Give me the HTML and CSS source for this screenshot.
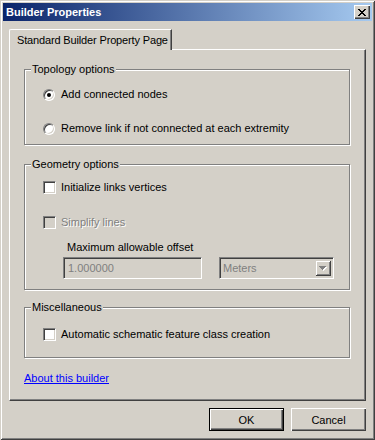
FILE: index.html
```html
<!DOCTYPE html>
<html lang="en">
<head>
<meta charset="UTF-8" />
<title>Builder Properties</title>
<link rel="stylesheet" href="styles.css">
</head>
<body>
<div class="window">
  <div class="titlebar">
    <span class="title">Builder Properties</span>
    <button class="close" aria-label="Close">
      <svg width="8" height="7" viewBox="0 0 8 7" shape-rendering="crispEdges">
        <path d="M0 0h2v1h-2zM6 0h2v1h-2zM1 1h2v1h-2zM5 1h2v1h-2zM2 2h4v1h-4zM3 3h2v1h-2zM2 4h4v1h-4zM1 5h2v1h-2zM5 5h2v1h-2zM0 6h2v1h-2zM6 6h2v1h-2z" fill="#000"/>
      </svg>
    </button>
  </div>
  <div class="content">
    <div class="tabstrip">
      <div class="tab">Standard Builder Property Page</div>
    </div>
    <div class="panel">
      <fieldset class="group group-topology">
        <legend>Topology options</legend>
        <label class="option"><span class="radio checked"></span>Add connected nodes</label>
        <label class="option option-second"><span class="radio"></span>Remove link if not connected at each extremity</label>
      </fieldset>

      <fieldset class="group group-geometry">
        <legend>Geometry options</legend>
        <label class="option"><span class="check"></span>Initialize links vertices</label>
        <label class="option option-disabled"><span class="check disabled"></span>Simplify lines</label>
        <div class="offset-label">Maximum allowable offset</div>
        <div class="offset-row">
          <div class="textbox">1.000000</div>
          <div class="combo">
            <span class="combo-text">Meters</span>
            <span class="combo-btn">
              <svg width="8" height="5" viewBox="0 0 8 5" shape-rendering="crispEdges">
                <path d="M1 1h7v1h-7zM2 2h5v1h-5zM3 3h3v1h-3zM4 4h1v1h-1z" fill="#fff"/>
                <path d="M0 0h7v1h-7zM1 1h5v1h-5zM2 2h3v1h-3zM3 3h1v1h-1z" fill="#808080"/>
              </svg>
            </span>
          </div>
        </div>
      </fieldset>

      <fieldset class="group group-misc">
        <legend>Miscellaneous</legend>
        <label class="option"><span class="check"></span>Automatic schematic feature class creation</label>
      </fieldset>

      <a href="#" class="about">About this builder</a>
    </div>
    <div class="buttons">
      <button class="btn btn-default">OK</button>
      <button class="btn">Cancel</button>
    </div>
  </div>
</div>
</body>
</html>
```

FILE: styles.css
```css
/* Classic dialog look */
* {
  box-sizing: border-box;
}
body {
  margin: 0;
  font-family: 'Liberation Sans', Arial, sans-serif;
  font-size: 11px;
  color: #000;
  background: #d4d0c8;
}
.window {
  width: 375px;
  height: 440px;
  padding: 3px;
  background: #d4d0c8;
  box-shadow: inset 1px 1px 0 #d4d0c8, inset -1px -1px 0 #404040,
              inset 2px 2px 0 #fff, inset -2px -2px 0 #808080;
}
.titlebar {
  height: 18px;
  display: flex;
  align-items: center;
  justify-content: space-between;
  padding: 0 2px 0 3px;
  background: linear-gradient(to right, #0a246a 0%, #a6caf0 100%);
}
.title {
  color: #fff;
  font-weight: 700;
  font-size: 11px;
  line-height: 13px;
}
.close {
  width: 16px;
  height: 14px;
  padding: 0;
  border: none;
  background: #d4d0c8;
  display: flex;
  align-items: center;
  justify-content: center;
  box-shadow: inset 1px 1px 0 #fff, inset -1px -1px 0 #404040, inset -2px -2px 0 #808080;
}
.close svg {
  display: block;
  margin-left: -1px;
}
.content {
  padding: 8px 6px 0 6px;
}
.tabstrip {
  display: flex;
}
.tab {
  position: relative;
  z-index: 1;
  width: 163px;
  height: 21px;
  margin-bottom: -1px;
  padding-left: 7px;
  line-height: 20px;
  white-space: nowrap;
  letter-spacing: -0.15px;
  background: #d4d0c8;
  border-left: 1px solid #fff;
  border-top: 1px solid #fff;
  border-top-left-radius: 2px;
  border-right: 1px solid #404040;
  box-shadow: inset -1px 0 0 #808080;
}
.panel {
  height: 352px;
  border: 1px solid;
  border-color: #fff #404040 #404040 #fff;
  box-shadow: inset -1px -1px 0 #808080;
  padding: 13px 0 0 14px;
}
.group {
  width: 326px;
  margin: 0;
  padding: 0 0 0 18px;
  border: 1px solid #808080;
  box-shadow: 1px 1px 0 #fff, inset 1px 1px 0 #fff;
}
.group legend {
  margin-left: -12px;
  padding: 0 1px;
  line-height: 13px;
  background: #d4d0c8;
}
.option {
  display: flex;
  align-items: center;
  height: 13px;
  line-height: 13px;
  white-space: nowrap;
}
.group-topology {
  padding-top: 12px;
  padding-bottom: 9px;
}
.group-topology .option-second {
  margin-top: 21px;
}
.group-geometry {
  margin-top: 13px;
  padding-top: 10px;
  padding-bottom: 10px;
}
.group-geometry .option-disabled {
  margin-top: 22px;
}
.group-misc {
  margin-top: 11px;
  padding-top: 14px;
  padding-bottom: 16px;
}
.radio {
  width: 12px;
  height: 12px;
  margin-right: 6px;
  border-radius: 50%;
  background: #fff;
  border: 1px solid;
  border-color: #808080 #fff #fff #808080;
  box-shadow: inset 1px 1px 0 #404040, inset -1px -1px 0 #d4d0c8;
  display: flex;
  align-items: center;
  justify-content: center;
}
.radio.checked::after {
  content: '';
  width: 4px;
  height: 4px;
  border-radius: 50%;
  background: #000;
}
.check {
  width: 13px;
  height: 13px;
  margin-right: 5px;
  background: #fff;
  border: 1px solid;
  border-color: #808080 #fff #fff #808080;
  box-shadow: inset 1px 1px 0 #404040, inset -1px -1px 0 #d4d0c8;
}
.check.disabled {
  background: #d4d0c8;
}
.option-disabled {
  color: #808080;
  text-shadow: 1px 1px 0 #fff;
}
.offset-label {
  margin: 12px 0 0 24px;
  line-height: 13px;
}
.offset-row {
  display: flex;
  gap: 17px;
  margin: 3px 0 0 20px;
}
.textbox {
  width: 139px;
  height: 22px;
  padding-left: 4px;
  line-height: 20px;
  color: #808080;
  background: #d4d0c8;
  border: 1px solid;
  border-color: #808080 #fff #fff #808080;
  box-shadow: inset 1px 1px 0 #404040, inset -1px -1px 0 #d4d0c8;
}
.combo {
  width: 115px;
  height: 22px;
  display: flex;
  align-items: center;
  justify-content: space-between;
  padding: 2px;
  color: #808080;
  background: #d4d0c8;
  border: 1px solid;
  border-color: #808080 #fff #fff #808080;
  box-shadow: inset 1px 1px 0 #404040, inset -1px -1px 0 #d4d0c8;
}
.combo-text {
  padding-left: 1px;
  line-height: 13px;
}
.combo-btn {
  width: 16px;
  height: 16px;
  display: flex;
  align-items: center;
  justify-content: center;
  box-shadow: inset 1px 1px 0 #d4d0c8, inset -1px -1px 0 #404040,
              inset 2px 2px 0 #fff, inset -2px -2px 0 #808080;
}
.about {
  display: inline-block;
  margin-top: 14px;
  line-height: 13px;
  color: #0000ff;
  text-decoration: underline;
}
.buttons {
  display: flex;
  justify-content: flex-end;
  gap: 7px;
  margin-top: 7px;
}
.btn {
  width: 75px;
  height: 23px;
  padding: 0;
  font-family: inherit;
  font-size: 11px;
  color: #000;
  background: #d4d0c8;
  border: none;
  box-shadow: inset 1px 1px 0 #fff, inset -1px -1px 0 #404040, inset -2px -2px 0 #808080;
}
.btn-default {
  border: 1px solid #000;
  box-shadow: inset 1px 1px 0 #fff, inset -1px -1px 0 #404040, inset -2px -2px 0 #808080;
}
```
